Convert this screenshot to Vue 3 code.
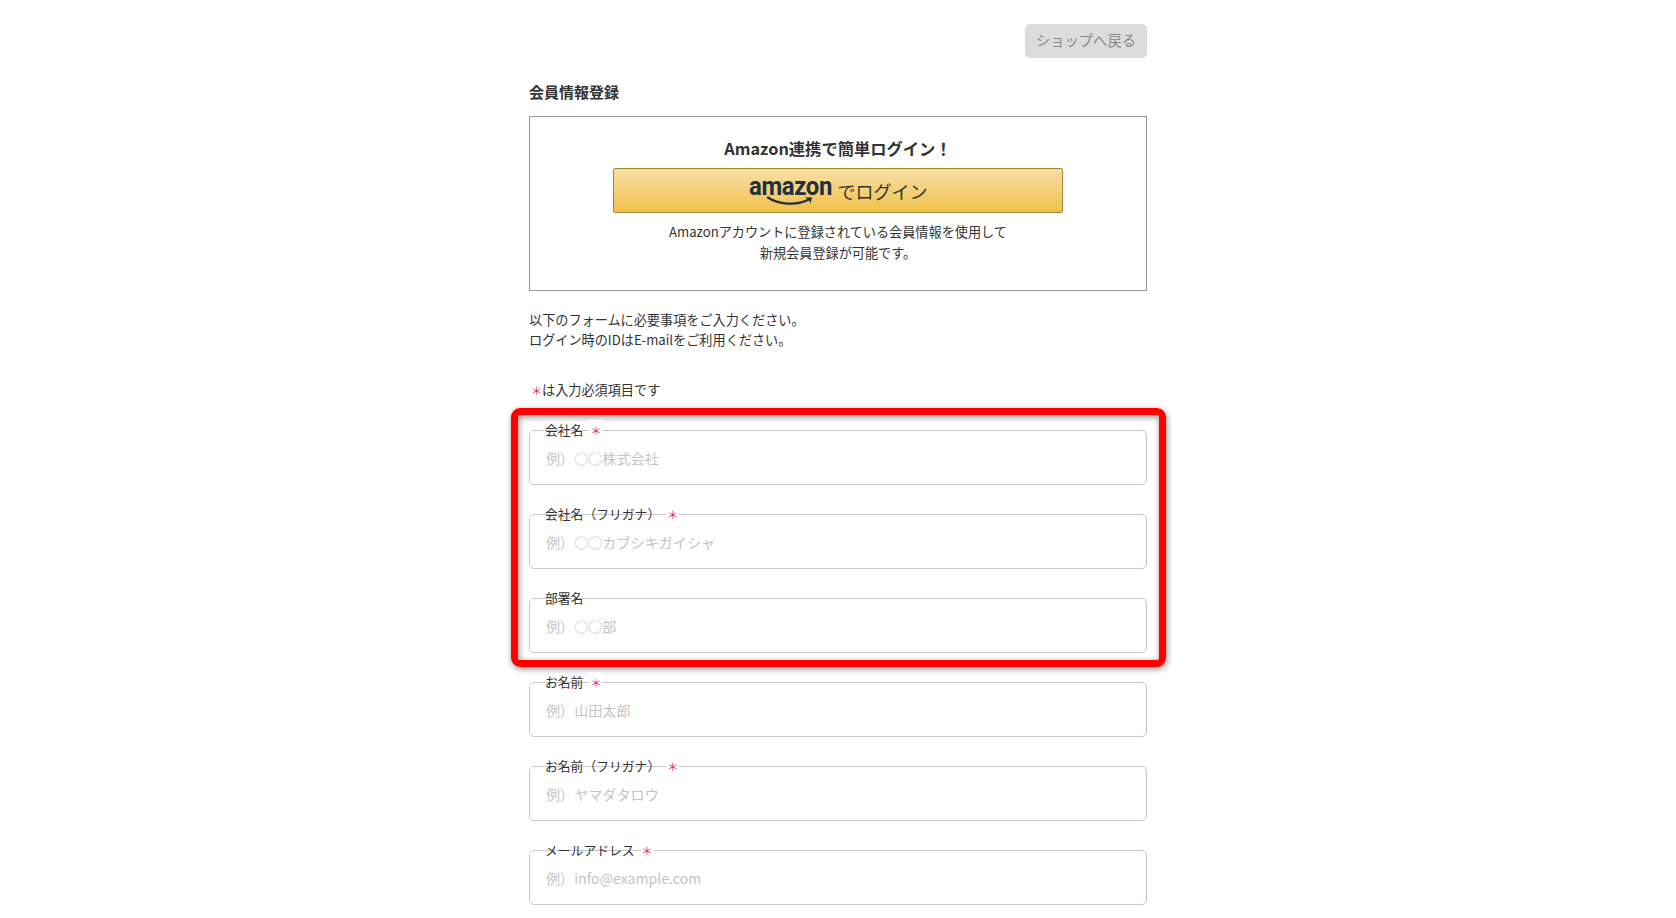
<template>
  <div class="page">
    <div class="top">
      <a class="back">ショップへ戻る</a>
    </div>
    <h2 class="title">会員情報登録</h2>

    <div class="amazon-box">
      <p class="amazon-lead">Amazon連携で簡単ログイン！</p>
      <div class="amazon-btn">
        <span class="logo">
          <span class="logo-text">amazon</span>
          <svg class="smile" viewBox="0 0 50 12">
            <path d="M2 1.5C12 8.5 30 10 43 3.5" fill="none" stroke="#222f3e" stroke-width="2.2" stroke-linecap="round"/>
            <path d="M38.5 1.5L46 1.2L44.5 8C44 6 43.5 4.5 42.5 3.8C41.5 3 40 2.2 38.5 1.5Z" fill="#222f3e"/>
          </svg>
        </span>
        <span class="login-text">でログイン</span>
      </div>
      <p class="amazon-note">Amazonアカウントに登録されている会員情報を使用して<br>新規会員登録が可能です。</p>
    </div>

    <p class="intro">以下のフォームに必要事項をご入力ください。<br>ログイン時のIDはE-mailをご利用ください。</p>
    <p class="req-note"><span class="star">＊</span>は入力必須項目です</p>

    <div class="fields">
      <div class="highlight-group">
        <div class="highlight"></div>
        <div v-for="f in companyFields" :key="f.label" class="field">
          <div class="field-label">
            <span>{{ f.label }}</span>
            <span v-if="f.required" class="label-star">＊</span>
          </div>
          <input :placeholder="f.placeholder" />
        </div>
      </div>
      <div v-for="f in personFields" :key="f.label" class="field">
        <div class="field-label">
          <span>{{ f.label }}</span>
          <span v-if="f.required" class="label-star">＊</span>
        </div>
        <input :placeholder="f.placeholder" />
      </div>
    </div>
  </div>
</template>

<script setup>
const companyFields = [
  { label: '会社名', required: true, placeholder: '例）○○株式会社' },
  { label: '会社名（フリガナ）', required: true, placeholder: '例）○○カブシキガイシャ' },
  { label: '部署名', required: false, placeholder: '例）○○部' }
]

const personFields = [
  { label: 'お名前', required: true, placeholder: '例）山田太郎' },
  { label: 'お名前（フリガナ）', required: true, placeholder: '例）ヤマダタロウ' },
  { label: 'メールアドレス', required: true, placeholder: '例）info@example.com' }
]
</script>

<style>
html, body {
  margin: 0;
  background: #fff;
  overflow: hidden;
}
</style>

<style scoped>
.page {
  width: 618px;
  margin: 0 auto;
  padding-top: 24px;
  font-family: "Noto Sans CJK JP", "Noto Sans", sans-serif;
  font-size: 13.15px;
  color: #333;
}

.top {
  display: flex;
  justify-content: flex-end;
}

.back {
  height: 34px;
  line-height: 31px;
  padding: 0 11px;
  background: #dcdcdc;
  border-radius: 5px;
  color: #888;
  font-size: 14.3px;
}

.title {
  margin: 24px 0 14px;
  font-size: 15px;
  line-height: 20px;
  font-weight: 700;
}

.amazon-box {
  box-sizing: border-box;
  height: 175px;
  border: 1px solid #999;
  padding-top: 19px;
  text-align: center;
}

.amazon-lead {
  margin: 0 0 8px;
  font-size: 16.3px;
  line-height: 24px;
  font-weight: 700;
}

.amazon-btn {
  box-sizing: border-box;
  width: 450px;
  height: 45px;
  margin: 0 auto;
  display: flex;
  align-items: center;
  justify-content: center;
  gap: 5px;
  border: 1px solid #a88734;
  border-radius: 2px;
  background: linear-gradient(to bottom, #f7dfa5, #f0c14b);
}

.logo {
  position: relative;
  display: block;
  width: 84px;
  height: 36px;
}

.logo-text {
  display: block;
  font-family: "Roboto", sans-serif;
  font-weight: 700;
  font-size: 26px;
  line-height: 27px;
  letter-spacing: -0.4px;
  color: #222f3e;
  transform: scaleX(0.92);
  transform-origin: left center;
}

.smile {
  position: absolute;
  left: 17px;
  top: 23px;
  width: 50px;
  height: 12px;
}

.login-text {
  font-size: 18px;
  color: #333;
}

.amazon-note {
  margin: 8px 0 0;
  line-height: 21px;
}

.intro {
  margin: 19px 0 0;
  line-height: 20px;
}

.req-note {
  margin: 30px 0 0;
  line-height: 20px;
}

.star {
  color: #e2185b;
  font-size: 11px;
  margin-left: 2px;
}

.fields {
  margin-top: 30px;
  display: flex;
  flex-direction: column;
  gap: 29px;
}

.highlight-group {
  position: relative;
  display: flex;
  flex-direction: column;
  gap: 29px;
}

.highlight {
  position: absolute;
  top: -22px;
  left: -18px;
  right: -19px;
  bottom: -14px;
  border: 7px solid #f00;
  border-radius: 9px;
  box-shadow: 1px 2px 6px rgba(0, 0, 0, 0.45), inset 1px 2px 6px rgba(0, 0, 0, 0.45);
  pointer-events: none;
}

.field {
  position: relative;
}

.field-label {
  position: absolute;
  left: 16px;
  top: -10px;
  display: flex;
  align-items: center;
  line-height: 20px;
  height: 20px;
  font-size: 12.8px;
}

.label-star {
  margin-left: 6px;
  padding: 0 1px;
  background: #fff;
  color: #e2185b;
  font-size: 11px;
}

.field input {
  display: block;
  box-sizing: border-box;
  width: 100%;
  height: 55px;
  padding: 0 16px;
  border: 1px solid #c8c8c8;
  border-radius: 5px;
  outline: none;
  font-family: inherit;
  font-size: 14.1px;
  color: #333;
  background: #fff;
}

.field input::placeholder {
  color: #c4c4c4;
  opacity: 1;
}
</style>
